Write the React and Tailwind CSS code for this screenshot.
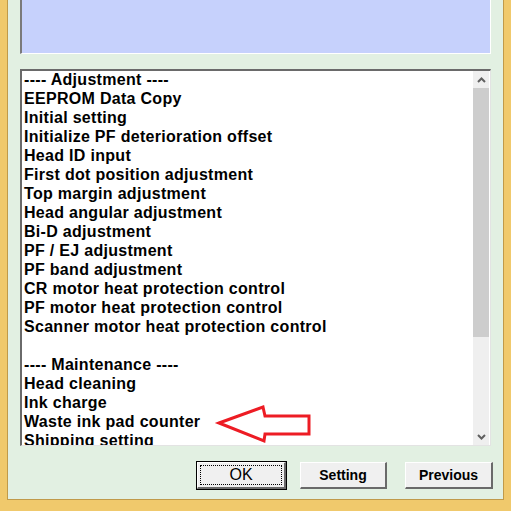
import React from 'react';

const items = [
  '---- Adjustment ----',
  'EEPROM Data Copy',
  'Initial setting',
  'Initialize PF deterioration offset',
  'Head ID input',
  'First dot position adjustment',
  'Top margin adjustment',
  'Head angular adjustment',
  'Bi-D adjustment',
  'PF / EJ adjustment',
  'PF band adjustment',
  'CR motor heat protection control',
  'PF motor heat protection control',
  'Scanner motor heat protection control',
  '',
  '---- Maintenance ----',
  'Head cleaning',
  'Ink charge',
  'Waste ink pad counter',
  'Shipping setting',
];

const Btn = ({ label, w, bold, focused }) => (
  <div
    className={`h-[27px] ${w} bg-[#f0f0f0] border-t border-l border-t-white border-l-white border-r-2 border-b-2 border-r-[#6a6a6a] border-b-[#6a6a6a] ${focused ? 'outline outline-1 outline-black' : ''} flex items-center justify-center p-[2px]`}
  >
    <div
      className={`w-full h-full flex items-center justify-center ${focused ? 'border border-dotted border-black' : ''}`}
    >
      <span className={`text-black ${bold ? 'font-bold text-[14px]' : 'text-[16px]'} leading-none`}>{label}</span>
    </div>
  </div>
);

const App = () => {
  return (
    <div
      className="w-[511px] h-[511px] bg-[#f0c96c] px-[7px] pb-[11px] overflow-hidden"
      style={{ fontFamily: '"Liberation Sans", Arial, sans-serif' }}
    >
      <div className="h-[500px] bg-[#e2f0e2] border-l border-r border-b border-[#c09a4a] flex flex-col pl-[12px] pr-[12px]">
        {/* top blue panel */}
        <div className="h-[54px] w-[471px] bg-[#c6d1fc] border-l-2 border-[#7a7a7a] border-b border-b-white border-r border-r-white" />

        {/* list box */}
        <div className="relative mt-[15px] h-[377px] w-[471px] bg-white border-t-2 border-l-2 border-t-[#6a6a6a] border-l-[#6a6a6a] border-r border-b border-r-[#e3e3e3] border-b-[#e3e3e3] flex">
          <div className="flex-1 overflow-hidden pl-[2px]">
            <div className="-mt-[1px]">
              {items.map((t, i) => (
                <div key={i} className="h-[19px] leading-[19px] text-[16px] tracking-[0.3px] font-bold text-black whitespace-nowrap">
                  {t}
                </div>
              ))}
            </div>
          </div>
          <div className="w-[16px] flex flex-col bg-[#efefef] mr-[1px]">
            <div className="h-[17px] flex items-center justify-center">
              <svg width="9" height="6" viewBox="0 0 9 6">
                <polyline points="1,5 4.5,1.5 8,5" fill="none" stroke="#606060" strokeWidth="2" />
              </svg>
            </div>
            <div className="h-[249px] bg-[#cdcdcd]" />
            <div className="flex-1" />
            <div className="h-[17px] flex items-center justify-center">
              <svg width="9" height="6" viewBox="0 0 9 6">
                <polyline points="1,1 4.5,4.5 8,1" fill="none" stroke="#606060" strokeWidth="2" />
              </svg>
            </div>
          </div>
          <svg className="absolute left-0 top-0" width="471" height="377" viewBox="0 0 471 377">
            <polygon
              points="197,352 241,336 243,345 287,345 287,363 243,363 242,370"
              fill="none"
              stroke="#ed1c24"
              strokeWidth="3"
              strokeLinejoin="miter"
            />
          </svg>
        </div>

        {/* buttons */}
        <div className="mt-[16px] flex items-start">
          <div className="ml-[177px]">
            <Btn label="OK" w="w-[89px]" focused />
          </div>
          <div className="ml-[14px]">
            <Btn label="Setting" w="w-[87px]" bold />
          </div>
          <div className="ml-[18px]">
            <Btn label="Previous" w="w-[88px]" bold />
          </div>
        </div>
      </div>
    </div>
  );
};

export default App;
